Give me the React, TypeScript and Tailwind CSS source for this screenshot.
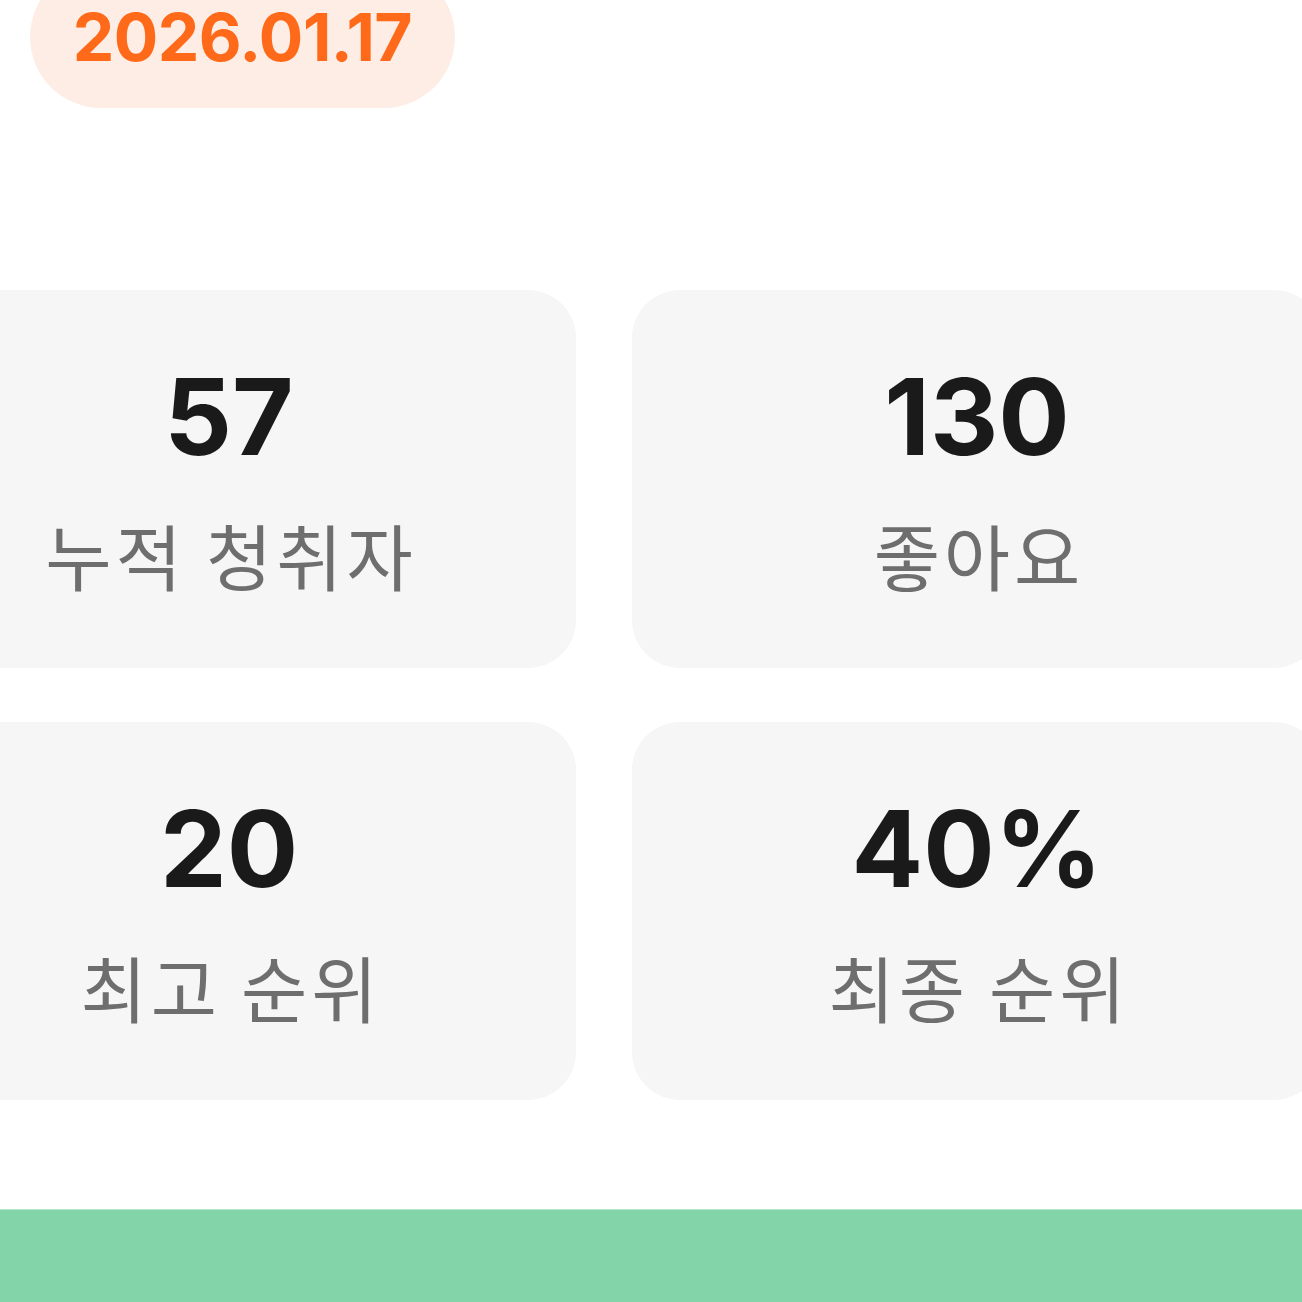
export default function App() {
  const stats = [
    { value: "57", label: "누적 청취자" },
    { value: "130", label: "좋아요" },
    { value: "20", label: "최고 순위" },
    { value: "40%", label: "최종 순위" },
  ];

  return (
    <div className="w-[1302px] h-[1302px] overflow-hidden bg-white flex flex-col">
      <div className="pl-[30px]">
        <div className="mt-[-34px] h-[142px] w-[425px] rounded-[71px] bg-[#fdede4] flex items-center justify-center">
          <span className="font-['Inter',sans-serif] font-bold text-[66px] leading-none tracking-[-0.5px] text-[#ff6a1a]">
            2026.01.17
          </span>
        </div>
      </div>

      <div className="mt-[182px] ml-[-118px] grid grid-cols-[694px_690px] gap-x-[56px] gap-y-[54px]">
        {stats.map((s) => (
          <div
            key={s.label}
            className="h-[378px] rounded-[48px] bg-[#f6f6f6] flex flex-col items-center pt-[74px]"
          >
            <div className="font-['Inter',sans-serif] font-bold text-[106px] leading-none text-[#1a1a1a]">
              {s.value}
            </div>
            <div className="mt-[48px] pl-[4px] font-['Noto_Sans_CJK_KR','Noto_Sans',sans-serif] text-[72px] leading-none tracking-[4px] text-[#6e6e6e]">
              {s.label}
            </div>
          </div>
        ))}
      </div>

      <div className="mt-auto h-[93px] bg-[#83d4a8] border-t border-[#b5e6cb]" />
    </div>
  );
}
